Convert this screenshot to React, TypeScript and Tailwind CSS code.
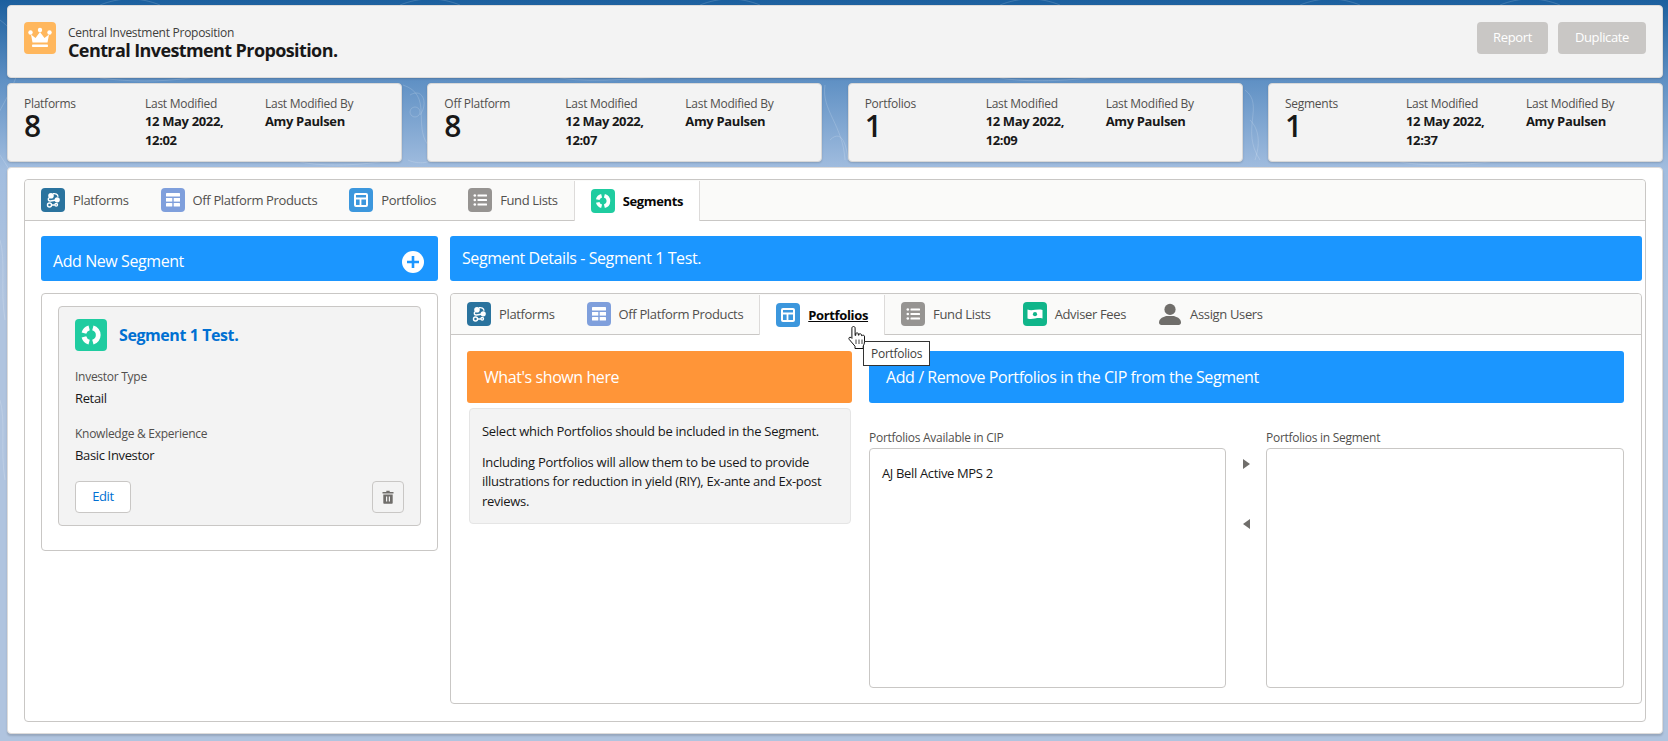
const font = "font-['Open_Sans','Noto_Sans',sans-serif]";

type IconKind = "platforms" | "offPlatform" | "portfolios" | "fundLists" | "segments" | "fees" | "users";

const iconBg: Record<IconKind, string> = {
  platforms: "bg-[#2a739e]",
  offPlatform: "bg-[#7f9fdc]",
  portfolios: "bg-[#3c97dd]",
  fundLists: "bg-[#969492]",
  segments: "bg-[#1fcca0]",
  fees: "bg-[#10b58a]",
  users: "bg-transparent",
};

function Glyph({ kind }: { kind: IconKind }) {
  if (kind === "platforms") {
    return (
      <g fill="none" stroke="#fff" strokeWidth="1.4">
        <circle cx="10" cy="7.800" r="2.800" fill="#fff" stroke="none" />
        <circle cx="16.200" cy="11.800" r="2.600" fill="#fff" stroke="none" />
        <circle cx="8.500" cy="17" r="2" />
        <circle cx="15.200" cy="16.800" r="1.300" />
        <path d="M8 9.800c-1.500 1.800-.5 3.400 1.500 3.200l4.500-.8M10.300 17h3.500M12 5.800c2.500-.6 4.800.6 5 3" />
      </g>
    );
  }
  if (kind === "offPlatform") {
    return (
      <g fill="#fff">
        <rect x="5" y="5" width="14" height="3.600" rx=".6" />
        <rect x="5" y="10" width="6.300" height="3.600" />
        <rect x="12.700" y="10" width="6.300" height="3.600" />
        <rect x="5" y="15" width="6.300" height="3.600" rx=".6" />
        <rect x="12.700" y="15" width="6.300" height="3.600" rx=".6" />
      </g>
    );
  }
  if (kind === "portfolios") {
    return (
      <g fill="none" stroke="#fff" strokeWidth="2">
        <rect x="6" y="6" width="12" height="12" rx="1" />
        <path d="M6 10.500h12M11.500 10.500V18" strokeWidth="1.800" />
      </g>
    );
  }
  if (kind === "fundLists") {
    return (
      <g fill="#fff">
        <circle cx="6.800" cy="7.500" r="1.300" />
        <circle cx="6.800" cy="12" r="1.300" />
        <circle cx="6.800" cy="16.500" r="1.300" />
        <rect x="9.500" y="6.400" width="9.500" height="2.200" rx=".5" />
        <rect x="9.500" y="10.900" width="9.500" height="2.200" rx=".5" />
        <rect x="9.500" y="15.400" width="9.500" height="2.200" rx=".5" />
      </g>
    );
  }
  if (kind === "segments") {
    return (
      <g fill="none" stroke="#fff" strokeWidth="3.600">
        <path d="M13.400 6.700A5.500 5.500 0 0 1 13.400 17.300" />
        <path d="M10.600 6.700A5.500 5.500 0 0 0 6.700 10.600" />
        <path d="M6.700 13.400A5.500 5.500 0 0 0 10.600 17.300" />
      </g>
    );
  }
  if (kind === "fees") {
    return (
      <g>
        <path d="M4.500 7.600c5 1.800 10-1.200 15 .4v8.600c-5-1.600-10 1.400-15-.2Z" fill="#fff" />
        <circle cx="12" cy="12.200" r="2.100" fill="#10b58a" />
      </g>
    );
  }
  return null;
}

function TabIcon({ kind, size = 24 }: { kind: IconKind; size?: number }) {
  if (kind === "users") {
    return (
      <svg viewBox="0 0 24 24" width={24} height={24} className="shrink-0">
        <circle cx="12" cy="7.400" r="5.600" fill="#706e6b" />
        <path d="M1 20.500c0-4.600 5-6 7.400-6.600h7.200c2.400.6 7.400 2 7.400 6.600 0 1.600-1 2.500-2.400 2.500H3.400C2 23 1 22.100 1 20.500Z" fill="#706e6b" />
      </svg>
    );
  }
  return (
    <span className={`${iconBg[kind]} flex shrink-0 items-center justify-center rounded-[4px]`} style={{ width: size, height: size }}>
      <svg viewBox="0 0 24 24" width={size} height={size}>
        <Glyph kind={kind} />
      </svg>
    </span>
  );
}

function Tab({ kind, label, active, hovered }: { kind: IconKind; label: string; active?: boolean; hovered?: boolean }) {
  return (
    <div
      className={`flex h-full items-center gap-2 px-[16px] ${
        active ? "relative -mb-px bg-white border-x border-[#dddbda] font-bold text-[#080707]" : "text-[#514f4d]"
      }`}
    >
      <TabIcon kind={kind} />
      <span className={`whitespace-nowrap pt-[2px] ${hovered ? "underline" : ""}`}>{label}</span>
    </div>
  );
}

function StatCard({ label, value, date, time }: { label: string; value: string; date: string; time: string }) {
  return (
    <div className="flex h-[79px] w-[395px] rounded-[4px] border border-[#d8d8d8] bg-[#f3f3f3] pl-[16px] pt-[11px] text-[13px] leading-[19px] shadow-[0_1px_2px_rgba(0,0,0,0.15)]">
      <div className="w-[121px]">
        <div className="text-[12px] leading-[18px] tracking-[-0.27px] text-[#514f4d]">{label}</div>
        <div className="text-[30px] font-semibold leading-[26px] text-[#181818]">{value}</div>
      </div>
      <div className="w-[120px]">
        <div className="text-[12px] leading-[17px] tracking-[-0.27px] text-[#514f4d]">Last Modified</div>
        <div className="font-bold text-[#181818]">
          {date}
          <br />
          {time}
        </div>
      </div>
      <div>
        <div className="text-[12px] leading-[17px] tracking-[-0.27px] text-[#514f4d]">Last Modified By</div>
        <div className="font-bold text-[#181818]">Amy Paulsen</div>
      </div>
    </div>
  );
}

function Banner({ text, color, className, textClass = "" }: { text: string; color: string; className: string; textClass?: string }) {
  return (
    <div className={`flex items-center rounded-[3px] pl-[12px] text-[16px] tracking-[-0.42px] text-white ${color} ${className}`}>
      <span className={textClass}>{text}</span>
    </div>
  );
}

function BackgroundPattern() {
  return (
    <svg className="absolute inset-0 h-full w-full" viewBox="0 0 1668 741" preserveAspectRatio="none" fill="none" stroke="#fff" strokeOpacity="0.16" strokeWidth="1">
      <path d="M0 20c40 30 10 70-5 100s30 50 20 80" />
      <path d="M403 85c30 10 10 40 25 60s-10 20-20 15" />
      <circle cx="415" cy="112" r="5" />
      <path d="M410 95c14-8 18 10 10 20" />
      <path d="M825 85c-4 25 18 40 20 75M830 140c10-10 16 0 18 20" />
      <path d="M1245 90c20 15-5 40 15 70M1250 120c10 10 10 25 5 40" />
      <path d="M100 78c30 4 60 4 90 0M300 162c20 4 50 4 80 0M560 78c40 6 80-2 120 0M1000 78c30 5 70 2 90 0M1400 162c30 5 70 2 90 0" />
      <path d="M100 5c20-8 40-8 60 0M400 5c20-8 40-8 60 0M700 5c20-8 40-8 60 0M1000 5c20-8 40-8 60 0M1300 5c20-8 40-8 60 0M1500 5c20-8 40-8 60 0" />
      <path d="M0 240c6 20 0 50 5 80M0 400c6 20 0 50 5 80" />
    </svg>
  );
}

export default function App() {
  return (
    <div className={`${font} relative h-[741px] w-[1668px] overflow-hidden bg-[linear-gradient(180deg,#1b5f9e_0px,#5f90c4_80px,#a2bddf_170px,#b0c4df_300px)] pb-[7px] pl-[7px] pr-[5px] pt-[5px] text-[13px] tracking-[-0.35px] text-[#181818]`}>
      <BackgroundPattern />

      <div className="relative flex h-full flex-col">
        {/* Page header */}
        <div className="flex h-[73px] shrink-0 items-start justify-between rounded-[4px] border border-[#dddbda] bg-[#f3f3f3] pl-[16px] pr-[16px] pt-[16px] shadow-[0_1px_2px_rgba(0,0,0,0.15)]">
          <div className="flex items-start gap-[12px]">
            <span className="flex h-[32px] w-[32px] items-center justify-center rounded-[4px] bg-[#ffb75d]">
              <svg viewBox="0 0 32 32" width="32" height="32" fill="#fff">
                <circle cx="6.500" cy="10.500" r="2.200" />
                <circle cx="16" cy="8" r="2.200" />
                <circle cx="25.500" cy="10.500" r="2.200" />
                <path d="M7 12.500l4.500 3.500 4.500-6 4.500 6 4.500-3.500-1.500 8H8.500Z" />
                <rect x="8" y="22.500" width="16" height="2.600" rx=".8" />
              </svg>
            </span>
            <div>
              <div className="pt-[2px] text-[12px] leading-[17px] tracking-[-0.27px] text-[#3e3e3c]">Central Investment Proposition</div>
              <div className="text-[18px] font-bold leading-[18px] tracking-[-0.6px] text-[#181818]">Central Investment Proposition.</div>
            </div>
          </div>
          <div className="flex gap-[10px]">
            <div className="flex h-[32px] w-[71px] items-center justify-center rounded-[4px] bg-[#c9c7c5] text-white">Report</div>
            <div className="flex h-[32px] w-[88px] items-center justify-center rounded-[4px] bg-[#c9c7c5] text-white">Duplicate</div>
          </div>
        </div>

        {/* Stat cards */}
        <div className="mt-[5px] flex shrink-0 justify-between">
          <StatCard label="Platforms" value="8" date="12 May 2022," time="12:02" />
          <StatCard label="Off Platform" value="8" date="12 May 2022," time="12:07" />
          <StatCard label="Portfolios" value="1" date="12 May 2022," time="12:09" />
          <StatCard label="Segments" value="1" date="12 May 2022," time="12:37" />
        </div>

        {/* Main panel */}
        <div className="mt-[5px] flex min-h-0 flex-1 rounded-[4px] border border-[#dddbda] bg-white px-[16px] pb-[11px] pt-[11px] shadow-[0_2px_2px_rgba(0,0,0,0.15)]">
          <div className="flex flex-1 flex-col rounded-[4px] border border-[#c9c7c5]">
            <div className="flex h-[41px] shrink-0 items-center rounded-t-[4px] border-b border-[#c9c7c5] bg-[#fafaf9]">
              <Tab kind="platforms" label="Platforms" />
              <Tab kind="offPlatform" label="Off Platform Products" />
              <Tab kind="portfolios" label="Portfolios" />
              <Tab kind="fundLists" label="Fund Lists" />
              <Tab kind="segments" label="Segments" active />
            </div>

            <div className="flex min-h-0 flex-1 gap-[12px] pl-[16px] pr-[3px] pt-[15px]">
              {/* Left column */}
              <div className="w-[397px] shrink-0">
                <div className="flex h-[45px] items-center justify-between rounded-[3px] bg-[#1b96ff] pl-[12px] pr-[14px] text-[16px] tracking-[-0.42px] text-white">
                  <span className="pt-[4px]">Add New Segment</span>
                  <svg viewBox="0 0 22 22" width="22" height="22" className="mt-[6px]">
                    <circle cx="11" cy="11" r="11" fill="#fff" />
                    <path d="M11 5v12M5 11h12" stroke="#1b96ff" strokeWidth="2.600" />
                  </svg>
                </div>
                <div className="mt-[12px] h-[258px] rounded-[4px] border border-[#c9c7c5] bg-white px-[16px] pt-[12px]">
                  <div className="h-[220px] rounded-[4px] border border-[#c9c7c5] bg-[#f3f3f3] px-[16px] pt-[12px]">
                    <div className="flex items-center gap-[12px]">
                      <TabIcon kind="segments" size={32} />
                      <span className="text-[16px] font-bold tracking-[-0.42px] text-[#0070d2]">Segment 1 Test.</span>
                    </div>
                    <div className="mt-[17px] text-[12px] leading-[18px] tracking-[-0.27px] text-[#514f4d]">Investor Type</div>
                    <div className="mt-[2px] leading-[20px] text-[#181818]">Retail</div>
                    <div className="mt-[17px] text-[12px] leading-[18px] tracking-[-0.27px] text-[#514f4d]">Knowledge &amp; Experience</div>
                    <div className="mt-[2px] leading-[20px] text-[#181818]">Basic Investor</div>
                    <div className="mt-[16px] flex justify-between">
                      <div className="flex h-[32px] w-[56px] items-center justify-center rounded-[4px] border border-[#c9c7c5] bg-white text-[#0070d2]">Edit</div>
                      <div className="flex h-[32px] w-[32px] items-center justify-center rounded-[4px] border border-[#c9c7c5] bg-[#f3f3f3]">
                        <svg viewBox="0 0 14 14" width="14" height="14" fill="#706e6b">
                          <path d="M5.300 .800h3.400v1.200h3.800v1.500H1.500V2h3.800Z" />
                          <path d="M2.300 4.500h9.400V13a.8.8 0 0 1-.8.800H3.100a.8.8 0 0 1-.8-.8ZM5 6.500v5h1.200v-5Zm2.800 0v5H9v-5Z" fillRule="evenodd" />
                        </svg>
                      </div>
                    </div>
                  </div>
                </div>
              </div>

              {/* Right column */}
              <div className="flex min-h-0 w-[1192px] flex-col">
                <Banner text="Segment Details - Segment 1 Test." color="bg-[#1b96ff]" className="h-[45px] shrink-0" textClass="mb-[2px]" />
                <div className="relative mt-[12px] h-[411px] rounded-[4px] border border-[#c9c7c5]">
                  <div className="flex h-[41px] items-center rounded-t-[4px] border-b border-[#c9c7c5] bg-[#fafaf9]">
                    <Tab kind="platforms" label="Platforms" />
                    <Tab kind="offPlatform" label="Off Platform Products" />
                    <Tab kind="portfolios" label="Portfolios" active hovered />
                    <Tab kind="fundLists" label="Fund Lists" />
                    <Tab kind="fees" label="Adviser Fees" />
                    <Tab kind="users" label="Assign Users" />
                  </div>

                  <div className="flex gap-[17px] pl-[16px] pt-[16px]">
                    <div className="w-[385px] shrink-0">
                      <Banner text="What's shown here" color="bg-[#ff9538]" className="h-[52px] !pl-[17px]" />
                      <div className="ml-[2px] mr-[1px] mt-[5px] h-[116px] rounded-[4px] border border-[#e5e5e5] bg-[#f3f3f3] px-[12px] pt-[13px] leading-[19.500px] tracking-[-0.28px] text-[#181818]">
                        <p>Select which Portfolios should be included in the Segment.</p>
                        <p className="mt-[11px]">Including Portfolios will allow them to be used to provide illustrations for reduction in yield (RIY), Ex-ante and Ex-post reviews.</p>
                      </div>
                    </div>

                    <div className="w-[755px] shrink-0">
                      <Banner text="Add / Remove Portfolios in the CIP from the Segment" color="bg-[#1b96ff]" className="h-[52px] !pl-[17px]" />
                      <div className="mt-[26px] flex">
                        <div className="w-[357px] shrink-0">
                          <div className="text-[12px] leading-[18px] tracking-[-0.27px] text-[#514f4d]">Portfolios Available in CIP</div>
                          <div className="mt-[1px] h-[240px] rounded-[4px] border border-[#c9c7c5] bg-white px-[12px] pt-[15px] text-[#181818]">AJ Bell Active MPS 2</div>
                        </div>
                        <div className="flex w-[40px] shrink-0 flex-col items-center pt-[30px]">
                          <div className="h-0 w-0 border-y-[5px] border-l-[7px] border-y-transparent border-l-[#706e6b]" />
                          <div className="mt-[50px] h-0 w-0 border-y-[5px] border-r-[7px] border-y-transparent border-r-[#706e6b]" />
                        </div>
                        <div className="w-[358px] shrink-0">
                          <div className="text-[12px] leading-[18px] tracking-[-0.27px] text-[#514f4d]">Portfolios in Segment</div>
                          <div className="mt-[1px] h-[240px] rounded-[4px] border border-[#c9c7c5] bg-white" />
                        </div>
                      </div>
                    </div>
                  </div>

                  {/* Hover cursor + tooltip */}
                  <div className="absolute left-[412px] top-[47px] whitespace-nowrap border border-[#333] bg-white px-[7px] text-[12px] leading-[23px] tracking-[-0.27px] text-[#3e3e3c]">Portfolios</div>
                  <svg className="absolute left-[396px] top-[31px]" viewBox="0 0 20 25" width="20" height="25">
                    <path d="M6.500 1.500c1 0 1.600.7 1.600 1.600v7.400l.7-.2V8.500c0-.8 2.400-.8 2.500 0v1.600l.7.100V9.300c0-.8 2.400-.6 2.500.3v1l.7.100c0-.8 2.200-.6 2.300.4v5.400c0 2.400-.8 3.500-1.300 4.500v2.500H8v-2.300L2.200 14.400c-.9-1.200.2-2.800 1.800-1.900l.9.900V3.100c0-.9.600-1.600 1.600-1.600Z" fill="#fff" stroke="#111" strokeWidth="1" />
                    <path d="M9 14.500V19M12 14.500V19M15 14.500V19" stroke="#111" strokeWidth=".8" />
                  </svg>
                </div>
              </div>
            </div>
          </div>
        </div>
      </div>
    </div>
  );
}
